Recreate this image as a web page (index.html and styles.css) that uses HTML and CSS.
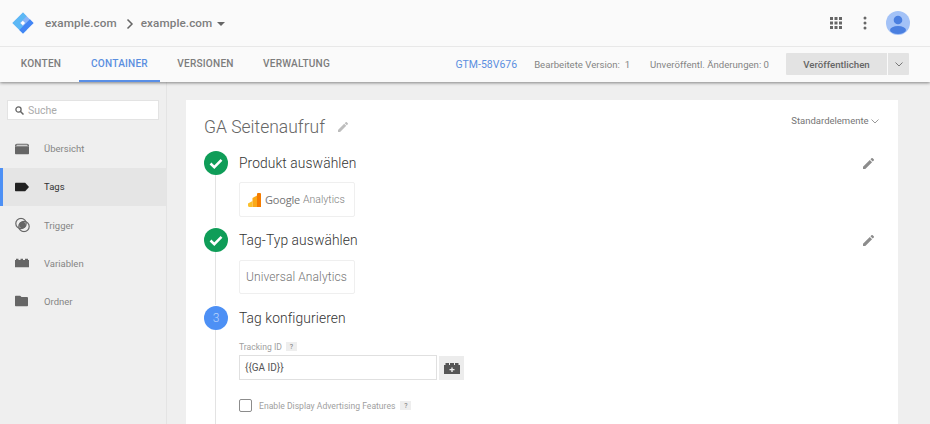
FILE: index.html
```html
<!DOCTYPE html>
<html lang="de">
<head>
<meta charset="utf-8">
<title>GA Seitenaufruf</title>
<link rel="stylesheet" href="styles.css">
</head>
<body>
<header class="top">
  <div class="topbar">
    <svg class="logo" width="22" height="22" viewBox="0 0 24 24"><path d="M12 .5 23.500 12 12 23.500 .5 12z" fill="#8ab4f8"/><path d="M12 .5 16 4.500 8.500 12 16 19.500 12 23.500 .5 12z" fill="#5cb8f5"/><path d="M23.500 12 12 23.500 8 19.500 19.500 8z" fill="#4285f4"/><path d="M11.800 9.500 14.300 12 11.800 14.500 9.300 12z" fill="#fff"/></svg>
    <span class="crumb">example.com</span>
    <svg class="crumb-sep" width="8" height="12" viewBox="0 0 8 12"><path d="M1.500 1.500 6 6l-4.500 4.500" fill="none" stroke="#666" stroke-width="1.500"/></svg>
    <span class="crumb">example.com</span>
    <svg class="crumb-caret" width="8" height="4" viewBox="0 0 8 4"><path d="M0 0h8L4 4z" fill="#666"/></svg>
    <div class="top-actions">
      <svg width="14" height="14" viewBox="0 0 14 14" fill="#666"><path d="M1 1h3v3H1zM5.500 1h3v3h-3zM10 1h3v3h-3zM1 5.500h3v3H1zM5.500 5.500h3v3h-3zM10 5.500h3v3h-3zM1 10h3v3H1zM5.500 10h3v3h-3zM10 10h3v3h-3z"/></svg>
      <svg class="dots" width="4" height="14" viewBox="0 0 4 14" fill="#666"><circle cx="2" cy="2" r="1.500"/><circle cx="2" cy="7" r="1.500"/><circle cx="2" cy="12" r="1.500"/></svg>
      <svg class="avatar" width="24" height="24" viewBox="0 0 24 24"><defs><clipPath id="av"><circle cx="12" cy="12" r="12"/></clipPath></defs><circle cx="12" cy="12" r="12" fill="#a3c2f7"/><g clip-path="url(#av)" fill="#4a7fe0"><circle cx="12" cy="9" r="4.300"/><ellipse cx="12" cy="19" rx="8" ry="4"/></g></svg>
    </div>
  </div>
  <nav class="tabs">
    <a class="tab">KONTEN</a>
    <a class="tab tab-active">CONTAINER</a>
    <a class="tab">VERSIONEN</a>
    <a class="tab">VERWALTUNG</a>
    <div class="status">
      <span class="gtm">GTM-58V676</span>
      <span class="stat">Bearbeitete Version:&nbsp; 1</span>
      <span class="stat">Unveröffentl. Änderungen: 0</span>
      <div class="publish">
        <span class="publish-main">Veröffentlichen</span>
        <span class="publish-more"><svg width="8" height="5" viewBox="0 0 8 5"><path d="M.5.5 4 4 7.500.5" fill="none" stroke="#777"/></svg></span>
      </div>
    </div>
  </nav>
</header>
<div class="body">
  <aside class="side">
    <div class="search">
      <svg width="9" height="9" viewBox="0 0 9 9"><circle cx="3.500" cy="3.500" r="2.600" fill="none" stroke="#666" stroke-width="1.300"/><path d="M5.500 5.500 8.500 8.500" stroke="#666" stroke-width="1.500"/></svg>
      <span>Suche</span>
    </div>
    <ul class="menu">
      <li class="item">
        <svg width="14" height="11" viewBox="0 0 14 11" fill="#666"><path d="M2.500 0h9A2.500 2.500 0 0 1 14 2.500V3H0v-.5A2.500 2.500 0 0 1 2.500 0zM1.500 1.200h11v1h-11z" fill-rule="evenodd"/><path d="M0 3h14v7a1 1 0 0 1-1 1H1a1 1 0 0 1-1-1z"/></svg>
        <span>Übersicht</span>
      </li>
      <li class="item item-active">
        <svg width="14" height="9" viewBox="0 0 14 9" fill="#212121"><path d="M1 0h9l4 4.500L10 9H1a1 1 0 0 1-1-1V1a1 1 0 0 1 1-1z"/></svg>
        <span>Tags</span>
      </li>
      <li class="item">
        <svg width="15" height="15" viewBox="0 0 15 15"><circle cx="6" cy="6" r="5.200" fill="none" stroke="#666" stroke-width="1.200"/><circle cx="9" cy="9" r="5.200" fill="none" stroke="#666" stroke-width="1.200"/><circle cx="7.500" cy="7.500" r="3.300" fill="#666"/></svg>
        <span>Trigger</span>
      </li>
      <li class="item">
        <svg width="14" height="9" viewBox="0 0 14 9" fill="#666"><path d="M0 1.500h1V0h2.500v1.500h2V0h2.500v1.500h2V0H13v1.500h1V9H0z"/></svg>
        <span>Variablen</span>
      </li>
      <li class="item">
        <svg width="13" height="11" viewBox="0 0 13 11" fill="#666"><path d="M1 0h4l1.500 1.500H12a1 1 0 0 1 1 1V10a1 1 0 0 1-1 1H1a1 1 0 0 1-1-1V1a1 1 0 0 1 1-1z"/></svg>
        <span>Ordner</span>
      </li>
    </ul>
  </aside>
  <main class="main">
    <section class="card">
      <div class="card-head">
        <h1 class="title">GA Seitenaufruf</h1>
        <svg class="title-pencil" width="10" height="10" viewBox="0 0 12 12"><path d="M0 12V9.500L7.400 2.100 9.900 4.600 2.500 12zM8.100 1.400 9.200.3a1 1 0 0 1 1.400 0l1.100 1.100a1 1 0 0 1 0 1.400L10.600 3.900z" fill="#bdbdbd"/></svg>
        <span class="defaults">Standardelemente <svg width="8" height="5" viewBox="0 0 8 5"><path d="M.5.5 4 4 7.500.5" fill="none" stroke="#999"/></svg></span>
      </div>
      <div class="step step-line">
        <div class="step-head">
          <span class="badge badge-done"><svg width="14" height="11" viewBox="0 0 14 11"><path d="M1.500 5.500 5.300 9.200 12.500 1.800" fill="none" stroke="#fff" stroke-width="2.500"/></svg></span>
          <h2 class="step-title">Produkt auswählen</h2>
          <svg class="edit" width="11" height="11" viewBox="0 0 12 12"><path d="M0 12V9.500L7.400 2.100 9.900 4.600 2.500 12zM8.100 1.400 9.200.3a1 1 0 0 1 1.400 0l1.100 1.100a1 1 0 0 1 0 1.400L10.600 3.900z" fill="#8c8c8c"/></svg>
        </div>
        <div class="box">
          <svg width="13" height="14" viewBox="0 0 13 14"><path d="M0 10.500 4.500 8v6H1.500A1.500 1.500 0 0 1 0 12.500z" fill="#fbc02d"/><path d="M4.500 5 9 2.500V14H4.500z" fill="#fba919"/><path d="M9 1a1 1 0 0 1 1-1h2a1 1 0 0 1 1 1v13H9z" fill="#f57c00"/></svg>
          <span class="ga-google">Google</span><span class="ga-analytics">Analytics</span>
        </div>
      </div>
      <div class="step step-line step-second">
        <div class="step-head">
          <span class="badge badge-done"><svg width="14" height="11" viewBox="0 0 14 11"><path d="M1.500 5.500 5.300 9.200 12.500 1.800" fill="none" stroke="#fff" stroke-width="2.500"/></svg></span>
          <h2 class="step-title">Tag-Typ auswählen</h2>
          <svg class="edit" width="11" height="11" viewBox="0 0 12 12"><path d="M0 12V9.500L7.400 2.100 9.900 4.600 2.500 12zM8.100 1.400 9.200.3a1 1 0 0 1 1.400 0l1.100 1.100a1 1 0 0 1 0 1.400L10.600 3.900z" fill="#8c8c8c"/></svg>
        </div>
        <div class="box box-text">Universal Analytics</div>
      </div>
      <div class="step step-line step-last">
        <div class="step-head">
          <span class="badge badge-current">3</span>
          <h2 class="step-title">Tag konfigurieren</h2>
        </div>
        <div class="field-label">Tracking ID <span class="help">?</span></div>
        <div class="field-row">
          <div class="input">{{GA ID}}</div>
          <span class="var-btn"><svg width="16" height="11" viewBox="0 0 16 11" fill="#555"><path d="M0 2h1.500V0H5v2h1V0h4v2h1V0h3.500v2H16v9H0z"/><path d="M7.300 4.500h1.400V6H10.500v1.300H8.700v1.700H7.300V7.300H5.500V6h1.800z" fill="#eee"/></svg></span>
        </div>
        <label class="check">
          <span class="checkbox"></span>
          <span class="check-text">Enable Display Advertising Features</span>
          <span class="help">?</span>
        </label>
      </div>
    </section>
  </main>
</div>
</body>
</html>
```
FILE: styles.css
```css
* { box-sizing: border-box; }
html, body { height: 100%; }
body {
  margin: 0;
  height: 424px;
  overflow: hidden;
  display: flex;
  flex-direction: column;
  background: #efefef;
  font-family: Roboto, "Liberation Sans", sans-serif;
  color: #666;
}
h1, h2, ul { margin: 0; padding: 0; font-weight: 400; }
ul { list-style: none; }
.top {
  background: #fafafa;
  box-shadow: 0 1px 3px rgba(0, 0, 0, .45);
  position: relative;
  z-index: 2;
}
.topbar {
  height: 47px;
  display: flex;
  align-items: center;
  padding: 0 20px 0 12px;
  border-bottom: 1px solid #e8e8e8;
}
.logo { margin-right: 11px; }
.crumb { font-size: 11.700px; font-weight: 500; color: #7d7d7d; letter-spacing: .1px; }
.crumb-sep { margin: 1px 7px 0 9px; }
.crumb-caret { margin: 2px 0 0 5px; }
.top-actions { margin-left: auto; display: flex; align-items: center; }
.dots { margin: 0 19px 0 20px; }
.tabs {
  height: 35px;
  display: flex;
  align-items: stretch;
  padding-right: 21px;
}
.tab {
  display: flex;
  align-items: center;
  justify-content: center;
  font-size: 10.100px;
  font-weight: 500;
  color: #7d7d7d;
  letter-spacing: .2px;
  border-bottom: 2px solid transparent;
}
.tab:nth-child(1) { width: 79px; padding-left: 3px; }
.tab:nth-child(2) { width: 81px; }
.tab:nth-child(3) { width: 86px; padding-left: 5px; }
.tab:nth-child(4) { width: 96px; padding-left: 5px; }
.tab-active { color: #5a8fe0; border-bottom-color: #5a8fe6; }
.status { margin-left: auto; display: flex; align-items: center; font-size: 9.600px; }
.gtm { color: #5a8fe0; font-size: 10.500px; margin-right: 17px; }
.stat { color: #858585; margin-right: 20px; }
.stat + .stat { margin-right: 17px; }
.publish { display: flex; height: 22px; margin-top: -1px; }
.publish-main {
  width: 101px;
  background: #e3e3e3;
  color: #666;
  font-size: 9.700px;
  font-weight: 500;
  display: flex;
  align-items: center;
  justify-content: center;
  border-radius: 1px 0 0 1px;
}
.publish-more {
  width: 21px;
  margin-left: 1px;
  background: #e3e3e3;
  display: flex;
  align-items: center;
  justify-content: center;
  border-radius: 0 1px 1px 0;
}
.body { flex: 1; display: flex; min-height: 0; }
.side {
  width: 167px;
  flex: none;
  border-right: 1px solid #e4e4e4;
  padding-top: 18px;
}
.search {
  height: 20px;
  margin: 0 7px 0 7px;
  background: #fff;
  border: 1px solid #e3e3e3;
  display: flex;
  align-items: center;
  gap: 4px;
  padding-left: 7px;
  font-size: 10.500px;
  color: #aaa;
}
.menu { margin-top: 9.600px; }
.item {
  height: 38.200px;
  display: flex;
  align-items: center;
  font-size: 9.500px;
  color: #858585;
  position: relative;
}
.item svg { position: absolute; left: 15px; top: 50%; transform: translateY(-50%); }
.item span { margin-left: 44px; }
.item-active {
  background: #e5e5e5;
  color: #333;
  box-shadow: inset 3px 0 0 #4d90f5;
}
.main { flex: 1; padding: 18px 32px 0 19px; min-width: 0; }
.card {
  background: #fff;
  height: 100%;
  padding: 0 19px 0 18px;
  overflow: hidden;
}
.card-head {
  height: 50px;
  display: flex;
  align-items: flex-start;
  padding-top: 17px;
}
.title { font-size: 17.500px; font-weight: 300; color: #666; line-height: 20px; }
.title-pencil { margin: 5px 0 0 13px; }
.defaults { margin-left: auto; font-size: 9.500px; color: #757575; line-height: 10px; position: relative; top: -1px; white-space: nowrap; }
.step { position: relative; padding-bottom: 10px; }
.step-line::before {
  content: "";
  position: absolute;
  left: 11px;
  top: 20px;
  bottom: 0;
  width: 1px;
  background: #e3e3e3;
}
.step-head { height: 26px; display: flex; align-items: center; position: relative; }
.badge {
  width: 24px;
  height: 24px;
  flex: none;
  border-radius: 50%;
  display: flex;
  align-items: center;
  justify-content: center;
  position: relative;
}
.badge-done { background: #0f9d58; }
.badge-current { background: #4d90f5; color: #b9d3fb; font-size: 12px; font-weight: 300; }
.step-title { font-size: 13.800px; font-weight: 300; color: #333; margin-left: 11px; letter-spacing: .1px; }
.edit { margin-left: auto; margin-right: 5px; }
.box {
  margin: 6px 0 0 35px;
  width: 116px;
  height: 35px;
  border: 1px solid #efefef;
  border-radius: 2px;
  display: flex;
  align-items: center;
  padding-left: 8px;
}
.step-second { padding-bottom: 11px; }
.step-second .box { margin-top: 7px; height: 34px; }
.ga-google { margin-left: 4px; font-size: 11px; color: #757575; letter-spacing: -.2px; font-family: "Open Sans", sans-serif; }
.ga-analytics { margin-left: 3px; font-size: 10.500px; color: #7d7d7d; font-weight: 300; }
.box-text { font-size: 12px; font-weight: 300; color: #757575; padding-left: 6px; letter-spacing: .1px; white-space: nowrap; }
.step-last { height: 200px; }
.field-label { margin: 10px 0 0 35px; font-size: 8.600px; color: #a0a0a0; display: flex; align-items: center; gap: 4px; height: 11px; }
.help {
  background: #eee;
  color: #777;
  font-size: 7px;
  width: 11px;
  height: 9px;
  display: inline-flex;
  align-items: center;
  justify-content: center;
}
.field-row { display: flex; margin: 3px 0 0 35px; gap: 2px; }
.input {
  width: 198px;
  height: 25px;
  border: 1px solid #e0e0e0;
  font-size: 10px;
  color: #555;
  display: flex;
  align-items: center;
  padding-left: 5px;
}
.var-btn {
  width: 25px;
  height: 24px;
  margin-top: 1px;
  background: #ececec;
  display: flex;
  align-items: center;
  justify-content: center;
}
.check { display: flex; align-items: center; margin: 19px 0 0 35px; }
.checkbox { width: 13px; height: 13px; border: 1.500px solid #8c8c8c; border-radius: 2px; }
.check-text { margin: 0 5px 0 7px; font-size: 8.600px; color: #a0a0a0; }
```
